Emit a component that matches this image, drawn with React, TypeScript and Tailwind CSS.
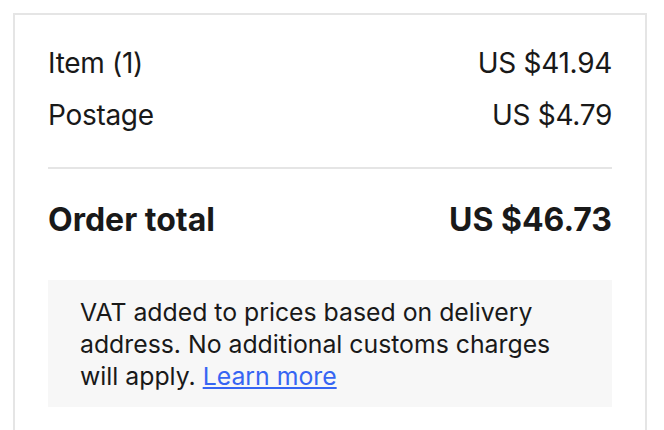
import React from "react";

export default function App() {
  return (
    <div
      className="w-[664px] h-[430px] overflow-hidden bg-white text-[#191919]"
      style={{ fontFamily: "Inter, 'Liberation Sans', sans-serif" }}
    >
      <div className="ml-[13px] mt-[13px] w-[634px] h-[440px] border-2 border-[#e5e5e5] px-[33px] pt-[30px]">
        <div className="flex flex-col gap-[16px] text-[28px] leading-[36px] tracking-[-0.3px]">
          <div className="flex justify-between">
            <span>Item (1)</span>
            <span>US $41.94</span>
          </div>
          <div className="flex justify-between">
            <span>Postage</span>
            <span>US $4.79</span>
          </div>
        </div>
        <div className="mt-[34px] h-[2px] bg-[#e5e5e5]" />
        <div className="mt-[31px] flex justify-between text-[32px] leading-[40px] font-bold">
          <span>Order total</span>
          <span>US $46.73</span>
        </div>
        <div className="mt-[40px] h-[127px] bg-[#f7f7f7] px-[32px] pt-[16px] text-[24.8px] leading-[32px]">
          VAT added to prices based on delivery address. No additional customs charges will apply.{" "}
          <a href="#" className="text-[#3665f3] underline">
            Learn more
          </a>
        </div>
      </div>
    </div>
  );
}
